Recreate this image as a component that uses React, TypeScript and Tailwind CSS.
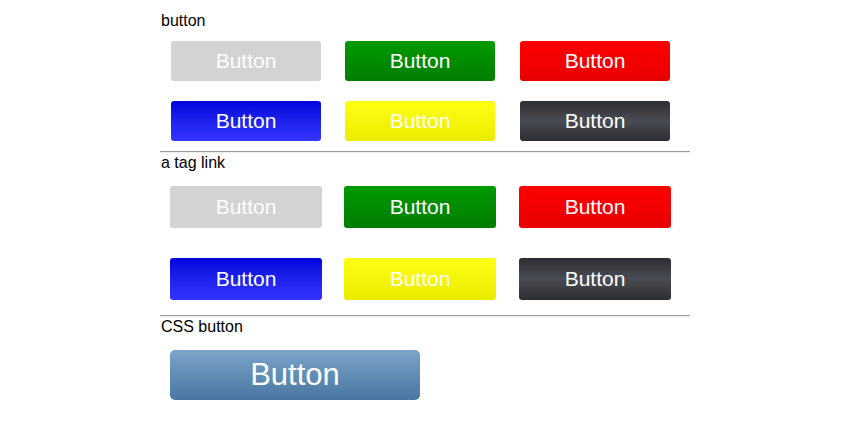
import React from 'react';

const base =
  'flex items-center justify-center rounded-[3px] text-white text-[21px] leading-none pb-[1px]';

const buttons = [
  'bg-[#d3d3d3]',
  'bg-gradient-to-b from-[#009a00] to-[#007d00]',
  'bg-gradient-to-b from-[#ff0000] to-[#e80000]',
  'bg-gradient-to-b from-[#0000dc] to-[#3434ff]',
  'bg-gradient-to-b from-[#ffff14] to-[#ebeb00]',
  'bg-[linear-gradient(to_bottom,#2c2e33_0%,#4a4c53_50%,#2c2e33_100%)]',
];

const Row = ({ items, link }: { items: string[]; link?: boolean }) => (
  <div className={link ? 'flex pl-[10px]' : 'flex pl-[11px]'}>
    {items.map((c, i) => {
      let gap = '';
      if (i === 1) gap = link ? 'ml-[22px]' : 'ml-[24px]';
      if (i === 2) gap = link ? 'ml-[23px]' : 'ml-[25px]';
      return (
        <div
          key={i}
          className={`${base} ${c} ${link ? 'w-[152px] h-[42px]' : 'w-[150px] h-[40px]'} ${gap}`}
        >
          Button
        </div>
      );
    })}
  </div>
);

const Rule = () => <div className="w-[530px] border-t border-[#9a9a9a] border-b border-b-[#eeeeee]" />;

export default function App() {
  return (
    <div className="w-[855px] h-[430px] bg-white font-['Liberation_Sans',Arial,sans-serif] text-black">
      <div className="ml-[160px] w-[530px] pt-[12px] text-[16px]">
        <div className="pl-[1px] leading-[18px]">button</div>
        <div className="mt-[11px] flex flex-col gap-[20px]">
          <Row items={buttons.slice(0, 3)} />
          <Row items={buttons.slice(3)} />
        </div>
        <div className="mt-[10px]">
          <Rule />
        </div>
        <div className="pl-[1px] leading-[18px] mt-[1px]">a tag link</div>
        <div className="mt-[14px] flex flex-col gap-[30px]">
          <Row items={buttons.slice(0, 3)} link />
          <Row items={buttons.slice(3)} link />
        </div>
        <div className="mt-[15px]">
          <Rule />
        </div>
        <div className="pl-[1px] leading-[18px] mt-[1px]">CSS button</div>
        <div className="mt-[14px] pl-[10px]">
          <div className="flex h-[50px] w-[250px] items-center justify-center rounded-[5px] bg-gradient-to-b from-[#7ba4c8] to-[#4877a2] text-[31px] leading-none text-white pb-[1px]">
            Button
          </div>
        </div>
      </div>
    </div>
  );
}
